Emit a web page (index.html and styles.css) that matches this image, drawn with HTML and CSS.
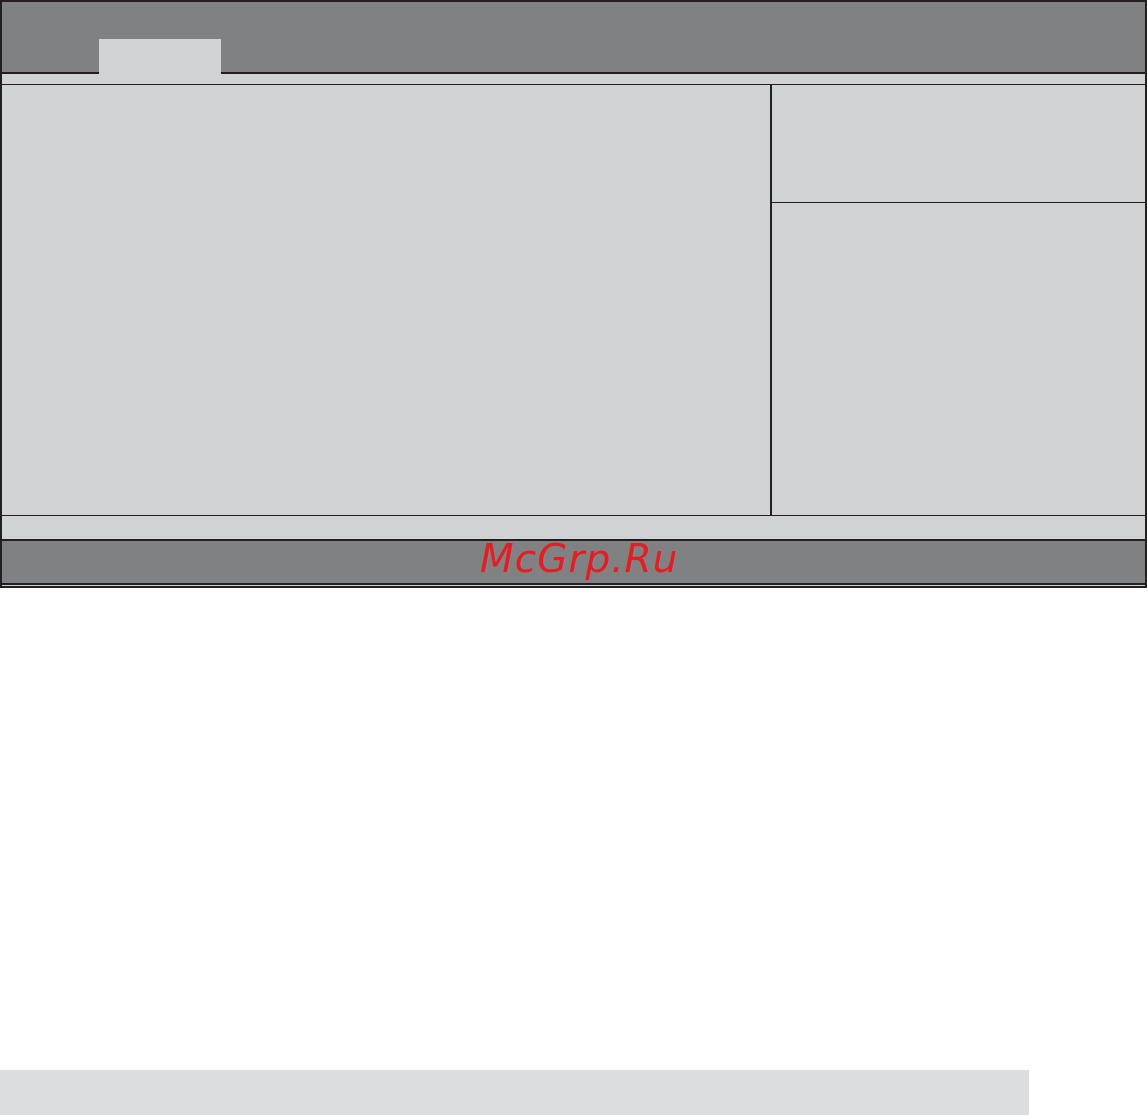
FILE: index.html
```html
<!DOCTYPE html>
<html>
<head>
<meta charset="utf-8">
<link rel="stylesheet" href="styles.css">
</head>
<body>
<div class="screen">
  <div class="header">
    <div class="tab"></div>
  </div>
  <div class="subbar"></div>
  <div class="main">
    <div class="content"></div>
    <div class="side">
      <div class="side-top"></div>
      <div class="side-bottom"></div>
    </div>
  </div>
  <div class="status"></div>
  <div class="footer"><span class="brand">McGrp.Ru</span></div>
  <div class="footer-gap"></div>
  <div class="footer-edge"></div>
</div>
<div class="bottom-bar"></div>
</body>
</html>
```

FILE: styles.css
```css
html, body {
  margin: 0;
  padding: 0;
  background: #ffffff;
}
body {
  width: 1147px;
  height: 1115px;
  overflow: hidden;
  font-family: "DejaVu Sans", Verdana, sans-serif;
}
.screen {
  width: 1147px;
  box-sizing: border-box;
  border-top: 2px solid #231f20;
  border-left: 2px solid #231f20;
  border-right: 2px solid #231f20;
  background: #d1d2d4;
}
.header {
  height: 70px;
  background: #808183;
  border-bottom: 2px solid #231f20;
  display: flex;
  align-items: flex-end;
}
.tab {
  width: 122px;
  height: 35px;
  margin-left: 97px;
  margin-bottom: -2px;
  background: #d1d2d4;
}
.subbar {
  height: 10px;
  border-bottom: 1px solid #231f20;
}
.main {
  display: flex;
  height: 430px;
  border-bottom: 1px solid #231f20;
}
.content {
  width: 768px;
  border-right: 2px solid #231f20;
}
.side {
  flex: 1;
  display: flex;
  flex-direction: column;
}
.side-top {
  height: 117px;
  border-bottom: 1px solid #231f20;
}
.side-bottom {
  flex: 1;
}
.status {
  height: 23px;
  border-bottom: 2px solid #231f20;
}
.footer {
  height: 42px;
  background: #808183;
  border-bottom: 2px solid #231f20;
  display: flex;
  align-items: flex-start;
  justify-content: center;
  padding-left: 12px;
}
.brand {
  font-family: "DejaVu Sans", Verdana, sans-serif;
  font-style: italic;
  font-size: 39px;
  letter-spacing: 1px;
  line-height: 36px;
  color: #e31e24;
}
.footer-gap {
  height: 1px;
  background: #d1d2d4;
}
.footer-edge {
  height: 2px;
  background: #231f20;
  margin-left: -2px;
  margin-right: -2px;
}
.bottom-bar {
  margin-top: 482px;
  width: 1029px;
  height: 45px;
  background: #dcdddf;
}
```
